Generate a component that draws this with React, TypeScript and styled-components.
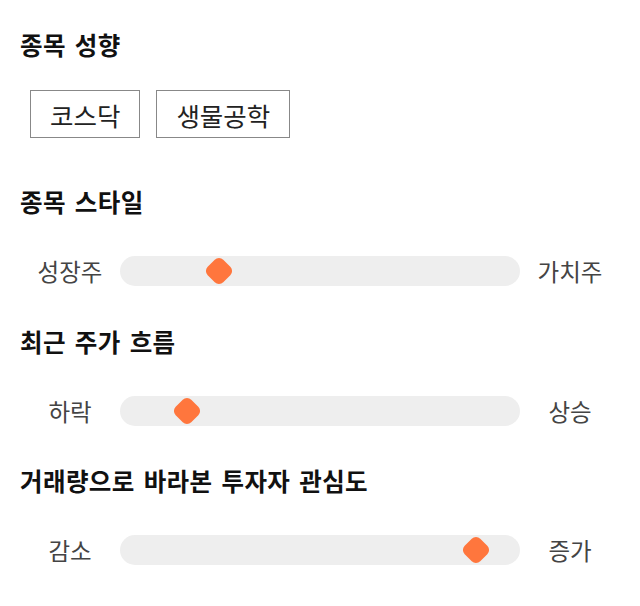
import React from 'react';
import styled, {createGlobalStyle} from "styled-components";

const GlobalStyle = createGlobalStyle`
  body {
    margin: 0;
    background: #fff;
    font-family: "Noto Sans CJK KR", "Noto Sans", sans-serif;
    color: #111;
  }
`

type SliderItem = {
    title: string;
    left: string;
    right: string;
    value: number;
}

const sliders: SliderItem[] = [
    {title: "종목 스타일", left: "성장주", right: "가치주", value: 24.8},
    {title: "최근 주가 흐름", left: "하락", right: "상승", value: 16.8},
    {title: "거래량으로 바라본 투자자 관심도", left: "감소", right: "증가", value: 89},
];

const tags = ["코스닥", "생물공학"];

const App: React.FC = () => {
    return (
        <Page>
            <GlobalStyle/>
            <Section $space={48}>
                <Heading $gap={29}>종목 성향</Heading>
                <TagRow>
                    {tags.map(t => <Tag key={t}>{t}</Tag>)}
                </TagRow>
            </Section>
            {sliders.map(s => (
                <Section key={s.title} $space={41.5}>
                    <Heading $gap={36}>{s.title}</Heading>
                    <SliderRow>
                        <Label>{s.left}</Label>
                        <Track>
                            <Thumb style={{left: `${s.value}%`}}/>
                        </Track>
                        <Label>{s.right}</Label>
                    </SliderRow>
                </Section>
            ))}
        </Page>
    );
};

const Page = styled.div`
  width: 640px;
  box-sizing: border-box;
  padding: 29px 20px 0;
`

const Section = styled.section<{ $space: number }>`
  margin-bottom: ${p => p.$space}px;
`

const Heading = styled.h2<{ $gap: number }>`
  margin: 0 0 ${p => p.$gap}px;
  font-size: 24.5px;
  line-height: 32px;
  font-weight: 700;
  letter-spacing: 0.4px;
  word-spacing: 3px;
  color: #111;
`

const TagRow = styled.div`
  display: flex;
  gap: 16px;
  padding-left: 10px;
`

const Tag = styled.div`
  height: 48px;
  box-sizing: border-box;
  padding: 0 19px;
  border: 1px solid #888;
  display: flex;
  align-items: center;
  font-size: 25.5px;
  color: #222;
`

const SliderRow = styled.div`
  display: grid;
  grid-template-columns: 100px 400px 100px;
  align-items: center;
  height: 30px;
`

const Label = styled.span`
  text-align: center;
  font-size: 23.5px;
  color: #444;
`

const Track = styled.div`
  position: relative;
  height: 30px;
  border-radius: 15px;
  background: #eeeeee;
`

const Thumb = styled.div`
  position: absolute;
  top: 50%;
  width: 22px;
  height: 22px;
  border-radius: 6px;
  background: #ff763d;
  transform: translate(-50%, -50%) rotate(45deg);
`

export default App;
